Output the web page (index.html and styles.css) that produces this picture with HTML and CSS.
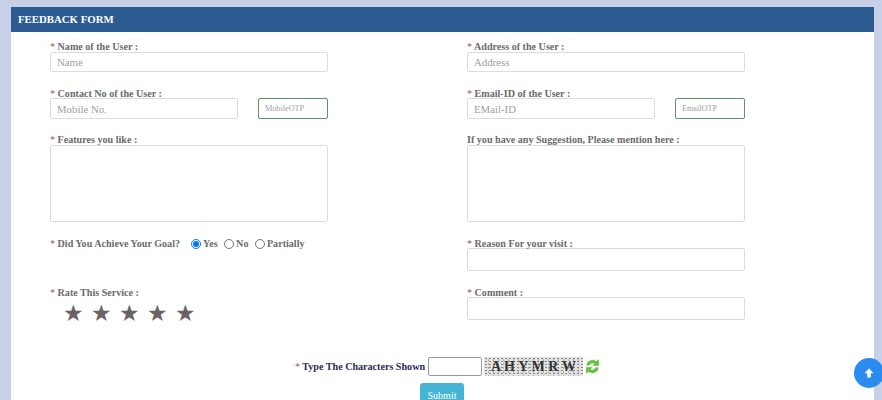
FILE: index.html
```html
<!DOCTYPE html>
<html lang="en">
<head>
    <meta charset="UTF-8">
    <meta name="viewport" content="width=device-width, initial-scale=1.0">
    <title>Feedback Form</title>
    <link rel="stylesheet" href="styles.css">
</head>
<body>
    <div class="panel">
        <div class="panel-head">FEEDBACK FORM</div>
        <form class="feedback-form">
            <div class="form-grid">
                <div class="field row-one">
                    <label><span class="req">*</span> Name of the User :</label>
                    <input type="text" placeholder="Name">
                </div>
                <div class="field row-one">
                    <label><span class="req">*</span> Address of the User :</label>
                    <input type="text" placeholder="Address">
                </div>

                <div class="field row-two">
                    <label><span class="req">*</span> Contact No of the User :</label>
                    <div class="otp-row">
                        <input type="text" placeholder="Mobile No.">
                        <input type="text" class="otp" placeholder="MobileOTP">
                    </div>
                </div>
                <div class="field row-two">
                    <label><span class="req">*</span> Email-ID of the User :</label>
                    <div class="otp-row">
                        <input type="text" placeholder="EMail-ID">
                        <input type="text" class="otp" placeholder="EmailOTP">
                    </div>
                </div>

                <div class="field row-three">
                    <label><span class="req">*</span> Features you like :</label>
                    <textarea></textarea>
                </div>
                <div class="field row-three">
                    <label>If you have any Suggestion, Please mention here :</label>
                    <textarea></textarea>
                </div>

                <div class="field row-four">
                    <div class="goal-row">
                        <label><span class="req">*</span> Did You Achieve Your Goal?</label>
                        <span class="radio-item first"><input type="radio" name="goal" checked>Yes</span>
                        <span class="radio-item"><input type="radio" name="goal">No</span>
                        <span class="radio-item"><input type="radio" name="goal">Partially</span>
                    </div>
                </div>
                <div class="field row-four">
                    <label><span class="req">*</span> Reason For your visit :</label>
                    <input type="text" class="tall">
                </div>

                <div class="field row-five">
                    <label><span class="req">*</span> Rate This Service :</label>
                    <div class="stars">
                        <span>★</span><span>★</span><span>★</span><span>★</span><span>★</span>
                    </div>
                </div>
                <div class="field row-five">
                    <label><span class="req">*</span> Comment :</label>
                    <input type="text" class="tall">
                </div>
            </div>

            <div class="captcha-row">
                <label><span class="req">*</span> Type The Characters Shown</label>
                <input type="text" class="captcha-input">
                <div class="captcha-img">A H Y M R W</div>
                <svg class="refresh" width="15" height="17" viewBox="0 0 16 17">
                    <path d="M1.5 7.5 A6.5 6.5 0 0 1 12 3 L14.8 .8 V7.8 H7.8 L10 5.6 A3.4 3.4 0 0 0 4.8 7.5 Z" fill="#62c43c"/>
                    <path d="M14.5 9.5 A6.5 6.5 0 0 1 4 14 L1.2 16.2 V9.2 H8.2 L6 11.4 A3.4 3.4 0 0 0 11.2 9.5 Z" fill="#62c43c"/>
                </svg>
            </div>
            <div class="submit-row">
                <button type="button">Submit</button>
            </div>
        </form>
    </div>

    <a class="to-top" href="#">
        <svg width="10" height="10" viewBox="0 0 10 10"><path d="M5 .5 L9.6 5.3 H6.8 V9.5 H3.2 V5.3 H.4 Z" fill="#fff"/></svg>
    </a>
</body>
</html>
```

FILE: styles.css
```css
* {
    margin: 0;
    padding: 0;
    box-sizing: border-box;
    font-family: "Liberation Serif", "Times New Roman", serif;
}

html, body {
    height: 400px;
    overflow: hidden;
}

body {
    background: #c8d0e8;
    padding: 7px 8px 0 11px;
}

.panel {
    background: #fff;
    height: 393px;
    overflow: hidden;
}

.panel-head {
    background: #2c5b92;
    color: #fff;
    font-size: 10.8px;
    font-weight: bold;
    height: 25px;
    line-height: 24px;
    padding-left: 7px;
}

.feedback-form {
    padding-left: 39px;
}

.form-grid {
    display: grid;
    grid-template-columns: 278px 278px;
    column-gap: 139px;
    padding-top: 9px;
}

.field label,
.goal-row {
    display: block;
    color: #6b6b6b;
    font-size: 10.1px;
    font-weight: bold;
    line-height: 11px;
}

.req {
    color: #a55;
    font-weight: normal;
}

.field input,
.field textarea {
    display: block;
    width: 100%;
    border: 1px solid #dcdcdc;
    border-radius: 2px;
    background: #fff;
    font-size: 10.8px;
    padding: 0 6px;
}

input::placeholder {
    color: #a0a0a0;
    opacity: 1;
}

.field input {
    height: 20px;
}

.field input.tall {
    height: 23px;
    margin-top: -1px;
}

.field textarea {
    height: 77px;
    resize: none;
}

.row-one {
    height: 47px;
}

.row-two {
    height: 46px;
}

.otp-row {
    display: flex;
    justify-content: space-between;
    align-items: center;
    margin-top: -1px;
}

.otp-row input {
    width: 188px;
    height: 21px;
}

.field .otp-row input.otp {
    width: 70px;
    height: 21px;
    margin-top: -1px;
    border-color: #5a9468;
    font-size: 8.2px;
}

.row-three {
    height: 104px;
}

.row-four {
    height: 49px;
}

.goal-row {
    display: flex;
    align-items: center;
}

.radio-item {
    display: flex;
    align-items: center;
    margin-left: 6.5px;
}

.radio-item.first {
    margin-left: 11px;
}

.field .radio-item input {
    width: 10px;
    height: 10px;
    margin-right: 2px;
    padding: 0;
}

.stars {
    display: flex;
    gap: 8px;
    padding-left: 13px;
    color: #6c6464;
    font-size: 23px;
    line-height: 32px;
}

.stars span {
    width: 20px;
    text-align: center;
}

.captcha-row {
    display: flex;
    align-items: center;
    justify-content: center;
    height: 20px;
    margin: 26px 0 0 -39px;
    padding-left: 10px;
}

.captcha-row label {
    color: #2b2b5c;
    font-size: 10.1px;
    font-weight: bold;
}

.captcha-input {
    width: 54px;
    height: 19px;
    margin: 0 2px 0 3px;
    border: 1px solid #999;
    border-radius: 2px;
}

.captcha-img {
    width: 99px;
    height: 19px;
    background-color: #e2e2e2;
    background-image: radial-gradient(#8a8a8a 0.6px, transparent 0.8px), radial-gradient(#aaa 0.6px, transparent 0.8px);
    background-size: 4px 3px, 5px 4px;
    background-position: 0 0, 2px 1px;
    color: #333;
    font-size: 14px;
    font-weight: bold;
    letter-spacing: 0.1px;
    line-height: 19px;
    text-align: center;
}

.refresh {
    margin-left: 2px;
}

.submit-row {
    display: flex;
    justify-content: center;
    margin: 7px 0 0 -39px;
    padding-right: 1px;
}

.submit-row button {
    width: 44px;
    height: 24px;
    background: #46b4d4;
    border: none;
    border-radius: 3px;
    color: #fff;
    font-size: 10px;
}

.to-top {
    position: absolute;
    left: 854px;
    top: 358px;
    display: flex;
    align-items: center;
    justify-content: center;
    width: 30px;
    height: 30px;
    border-radius: 50%;
    background: #2b8cf0;
}
```
